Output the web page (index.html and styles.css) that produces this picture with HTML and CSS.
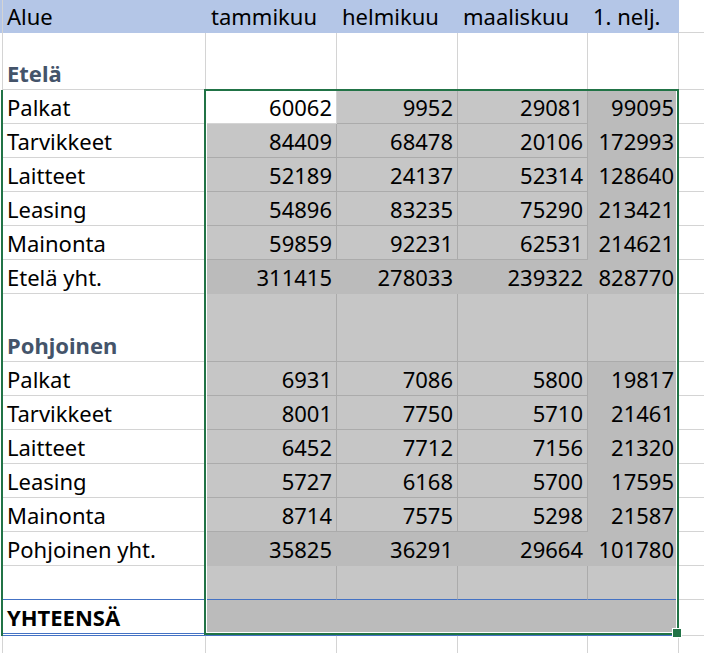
FILE: index.html
```html
<!DOCTYPE html>
<html lang="fi">
<head>
<meta charset="utf-8">
<title>Alue</title>
<link rel="stylesheet" href="styles.css">
</head>
<body>
<div class="sheet">
  <!-- header -->
  <div class="rh hb"></div><div class="c hd">Alue</div><div class="c hd">tammikuu</div><div class="c hd">helmikuu</div><div class="c hd">maaliskuu</div><div class="c hd">1. nelj.</div><div class="c f"></div>
  <!-- Etelä -->
  <div class="rh"></div><div class="c head">Etelä</div><div class="c"></div><div class="c"></div><div class="c"></div><div class="c"></div><div class="c f"></div>
  <div class="rh on"></div><div class="c">Palkat</div><div class="c n">60062</div><div class="c n s">9952</div><div class="c n s">29081</div><div class="c n d">99095</div><div class="c f"></div>
  <div class="rh on"></div><div class="c">Tarvikkeet</div><div class="c n s">84409</div><div class="c n s">68478</div><div class="c n s">20106</div><div class="c n d">172993</div><div class="c f"></div>
  <div class="rh on"></div><div class="c">Laitteet</div><div class="c n s">52189</div><div class="c n s">24137</div><div class="c n s">52314</div><div class="c n d">128640</div><div class="c f"></div>
  <div class="rh on"></div><div class="c">Leasing</div><div class="c n s">54896</div><div class="c n s">83235</div><div class="c n s">75290</div><div class="c n d">213421</div><div class="c f"></div>
  <div class="rh on"></div><div class="c">Mainonta</div><div class="c n s">59859</div><div class="c n s">92231</div><div class="c n s">62531</div><div class="c n d">214621</div><div class="c f"></div>
  <div class="rh on"></div><div class="c">Etelä yht.</div><div class="c n d">311415</div><div class="c n d">278033</div><div class="c n d">239322</div><div class="c n d">828770</div><div class="c f"></div>
  <!-- Pohjoinen -->
  <div class="rh on"></div><div class="c head">Pohjoinen</div><div class="c s"></div><div class="c s"></div><div class="c s"></div><div class="c s"></div><div class="c f"></div>
  <div class="rh on"></div><div class="c">Palkat</div><div class="c n s">6931</div><div class="c n s">7086</div><div class="c n s">5800</div><div class="c n d">19817</div><div class="c f"></div>
  <div class="rh on"></div><div class="c">Tarvikkeet</div><div class="c n s">8001</div><div class="c n s">7750</div><div class="c n s">5710</div><div class="c n d">21461</div><div class="c f"></div>
  <div class="rh on"></div><div class="c">Laitteet</div><div class="c n s">6452</div><div class="c n s">7712</div><div class="c n s">7156</div><div class="c n d">21320</div><div class="c f"></div>
  <div class="rh on"></div><div class="c">Leasing</div><div class="c n s">5727</div><div class="c n s">6168</div><div class="c n s">5700</div><div class="c n d">17595</div><div class="c f"></div>
  <div class="rh on"></div><div class="c">Mainonta</div><div class="c n s">8714</div><div class="c n s">7575</div><div class="c n s">5298</div><div class="c n d">21587</div><div class="c f"></div>
  <div class="rh on"></div><div class="c">Pohjoinen yht.</div><div class="c n d">35825</div><div class="c n d">36291</div><div class="c n d">29664</div><div class="c n d">101780</div><div class="c f"></div>
  <!-- empty -->
  <div class="rh on"></div><div class="c b"></div><div class="c s b"></div><div class="c s b"></div><div class="c s b"></div><div class="c s b"></div><div class="c f"></div>
  <!-- total -->
  <div class="rh on"></div><div class="c tot dbl">YHTEENSÄ</div><div class="c d dbl"></div><div class="c d dbl"></div><div class="c d dbl"></div><div class="c d dbl"></div><div class="c f"></div>
  <!-- last -->
  <div class="rh"></div><div class="c"></div><div class="c"></div><div class="c"></div><div class="c"></div><div class="c"></div><div class="c f"></div>

  <div class="selection"></div>
  <div class="handle"></div>
</div>
</body>
</html>
```

FILE: styles.css
```css
* {
  box-sizing: border-box;
  margin: 0;
  padding: 0;
}

body {
  margin: 0;
  background: #ffffff;
  font-family: "Noto Sans", "Liberation Sans", sans-serif;
  font-size: 22px;
  color: #000000;
}

.sheet {
  position: relative;
  display: grid;
  grid-template-columns: 3px 203px 131px 121px 130px 91px 1fr;
  grid-template-rows: 33px 57px repeat(6, 34px) 68px repeat(7, 34px) 36px 30px;
  width: 704px;
  height: 653px;
  overflow: hidden;
}

.c {
  display: flex;
  align-items: flex-end;
  padding: 0 4px 3px 4px;
  line-height: 26px;
  border-right: 1px solid #d4d4d4;
  border-bottom: 1px solid #d4d4d4;
  white-space: nowrap;
  overflow: hidden;
}

.n {
  justify-content: flex-end;
}

.hd {
  background: #b4c6e7;
  border-color: #b4c6e7;
  padding-left: 5px;
}

.hd:nth-child(2) {
  padding-left: 4px;
}

.f {
  border-right: none;
}

.head {
  font-weight: 700;
  color: #44546a;
}

.tot {
  font-weight: 700;
}

.s {
  background: #c6c6c6;
  border-color: #ababab;
}

.d {
  background: #bbbbbb;
  border-color: #bbbbbb;
}

.b {
  border-bottom-color: #4472c4;
}

.dbl {
  border-bottom: 3px double #4472c4;
}

.rh {
  border-right: 1px solid #d4d4d4;
}

.rh.hb {
  background: #b4c6e7;
}

.rh.on {
  border-right: 2px solid #217346;
}

.selection {
  position: absolute;
  left: 204px;
  top: 89px;
  width: 475px;
  height: 546px;
  border: 2px solid #217346;
  box-shadow: inset -1px -1px 0 #ffffff, inset 1px 0 0 #ffffff;
  pointer-events: none;
}

.handle {
  position: absolute;
  left: 672px;
  top: 628px;
  width: 10px;
  height: 10px;
  background: #217346;
  border: 1px solid #ffffff;
}
```
